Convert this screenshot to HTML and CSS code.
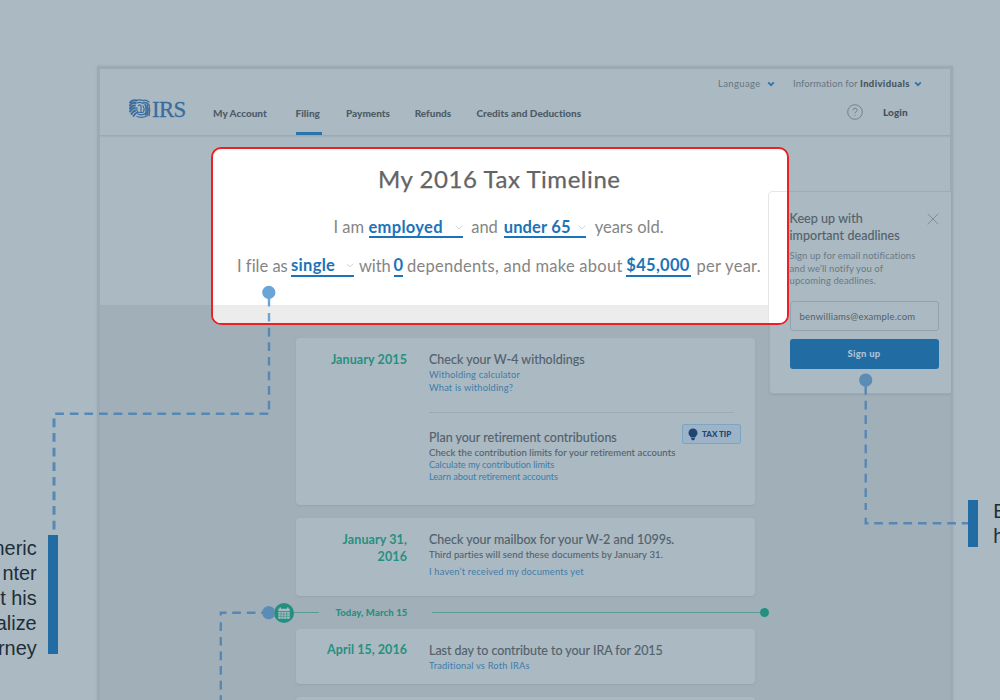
FILE: index.html
```html
<!DOCTYPE html>
<html lang="en">
<head>
<meta charset="utf-8">
<title>My 2016 Tax Timeline</title>
<link rel="stylesheet" href="styles.css">
</head>
<body>
<main class="board">
  <div class="site">
    <header class="header">
      <div class="utility">
        <span class="language">Language</span>
        <svg class="caret" viewBox="0 0 8 6"><path d="M1.2 1.4 4 4.2 6.8 1.4"/></svg>
        <span class="audience">Information for <b>Individuals</b></span>
        <svg class="caret" viewBox="0 0 8 6"><path d="M1.2 1.4 4 4.2 6.8 1.4"/></svg>
      </div>
      <div class="mainbar">
        <div class="logo">
          <svg class="eagle" viewBox="0 0 22 20">
            <g fill="none" stroke="#3a6d9d" stroke-linecap="round">
              <path stroke-width="1.9" d="M7.5 1.5Q3 .5 1 3.500M6.500 4Q3 3 .8 6.500M6 6.500Q3 6 .8 9.500M6 9Q3 9 1 12.500M6.500 11.500Q4 12 2.500 15M8 13.500Q6 14.500 4.500 17"/>
              <path stroke-width="1.300" d="M7.500 1.500Q11 .2 14 1.500M14 1.500Q17 .5 20 3M14.500 3.500Q18 3 20.500 6.500M8 4Q11 2.500 14 4.500M8 17.500Q13 19.500 18 17M9 15Q13 17 17 14"/>
              <path stroke-width="1.200" d="M9.500 6.500Q12 5 12 7.500V13.500M8 8.500Q7 11 9 13M10 13.500H14M14 7Q16 10 14.500 12.500"/>
              <path stroke-width="1.500" d="M16 5Q18 10 16.500 16M18.200 6Q19.500 11 18.200 16M20.300 8Q21 12 20 16.500"/>
            </g>
          </svg>
          <span class="logo-name">IRS</span>
        </div>
        <nav class="nav">
          <a>My Account</a><a class="active">Filing</a><a>Payments</a><a>Refunds</a><a>Credits and Deductions</a>
        </nav>
        <svg class="help" viewBox="0 0 16 16"><circle cx="8" cy="8" r="7.300"/><path d="M5.900 6.300Q6 4.200 8 4.200T10.100 6.200Q10.100 7.200 9 7.800T8 9.500M8 11.200V12"/></svg>
        <a class="login">Login</a>
      </div>
    </header>
    <div class="hero"></div>
    <section class="timeline">
      <article class="card card-a">
        <h2 class="date">January 2015</h2>
        <div class="body">
          <div class="entry first">
            <h3>Check your W-4 witholdings</h3>
            <a class="link wide">Witholding calculator</a>
            <a class="link wide">What is witholding?</a>
          </div>
          <div class="entry second">
            <h3>Plan your retirement contributions</h3>
            <p class="note">Check the contribution limits for your retirement accounts</p>
            <a class="link small">Calculate my contribution limits</a>
            <a class="link small">Learn about retirement accounts</a>
            <div class="tip">
              <svg class="bulb" viewBox="0 0 10 13"><path d="M5 .4A4.500 4.500 0 0 0 .5 4.900C.5 7 2.200 8 2.900 9.500H7.100C7.800 8 9.500 7 9.500 4.900A4.500 4.500 0 0 0 5 .4ZM3.200 10H6.800V11L5.900 12.300H4.100L3.200 11Z"/></svg>
              <span>TAX TIP</span>
            </div>
          </div>
        </div>
      </article>
      <article class="card card-b">
        <h2 class="date">January 31,<br>2016</h2>
        <div class="body">
          <h3>Check your mailbox for your W-2 and 1099s.</h3>
          <p class="note">Third parties will send these documents by January 31.</p>
          <a class="link wide">I haven’t received my documents yet</a>
        </div>
      </article>
      <div class="today">
        <svg class="calendar" viewBox="0 0 20 20">
          <circle cx="10" cy="10" r="10" fill="#23907f"/>
          <path fill="#abb9c3" d="M4.300 5.800H5.500V4.500H7V5.800H13V4.500H14.500V5.800H15.700V8H4.300ZM4.300 8.700H15.700V15.700H4.300Z"/>
          <path fill="none" stroke="#23907f" stroke-width=".55" d="M4.300 11H15.700M4.300 13.300H15.700M7 8.700V15.700M9.800 8.700V15.700M12.700 8.700V15.700"/>
        </svg>
        <i class="rule short"></i><span class="now">Today, March 15</span><i class="rule long"></i><i class="end"></i>
      </div>
      <article class="card card-c">
        <h2 class="date">April 15, 2016</h2>
        <div class="body">
          <h3>Last day to contribute to your IRA for 2015</h3>
          <a class="link wide">Traditional vs Roth IRAs</a>
        </div>
      </article>
      <article class="card card-d"></article>
    </section>
  </div>

  <aside class="signup">
    <div class="signup-head">
      <h2>Keep up with<br>important deadlines</h2>
      <svg class="close" viewBox="0 0 12 12"><path d="M.7.700 11.300 11.300M11.300.7.700 11.300"/></svg>
    </div>
    <p>Sign up for email notifications<br>and we’ll notify you of<br>upcoming deadlines.</p>
    <div class="email">benwilliams@example.com</div>
    <div class="button">Sign up</div>
  </aside>

  <section class="spotlight">
    <div class="under-card"></div>
    <h1>My 2016 Tax Timeline</h1>
    <div class="sentence one">
      <span>I am</span>
      <span class="field"><b>employed</b><svg viewBox="0 0 8 5"><path d="M.7.700 4 3.900 7.300.7"/></svg></span>
      <span>and</span>
      <span class="field"><b class="age">under 65</b><svg viewBox="0 0 8 5"><path d="M.7.700 4 3.900 7.300.7"/></svg></span>
      <span>years old.</span>
    </div>
    <div class="sentence two">
      <span>I file as</span>
      <span class="field"><b>single</b><svg viewBox="0 0 8 5"><path d="M.7.700 4 3.900 7.300.7"/></svg></span>
      <span class="with">with</span>
      <span class="field"><b>0</b></span>
      <span class="loose">dependents, and make about</span>
      <span class="field"><b>$45,000</b></span>
      <span class="loose">per year.</span>
    </div>
    <div class="strip"></div>
  </section>

  <svg class="connectors" viewBox="0 0 1000 700">
    <g fill="none" stroke="#5688b3" stroke-width="2.400" stroke-dasharray="8.700 5.900">
      <path d="M269 327.700V410"/><path d="M268.300 413.700H54"/><path stroke-width="3" d="M54 418.500V530"/>
      <path d="M865.700 400.700V510"/><path d="M874.200 523.300H968"/>
      <path d="M232.200 612.700H262"/><path d="M220.800 622.300V700"/>
    </g>
    <g fill="none" stroke="#5688b3" stroke-width="2.400">
      <path d="M865.700 380V394.700"/><path d="M865.700 517.700V523.300H868.500"/><path d="M226.500 612.700H220.800V615.500"/><path d="M261.500 612.700H269"/>
    </g>
    <path d="M269 292V306.500M269 313V321.500" stroke="#6aa5d7" stroke-width="2.400"/>
    <circle cx="268.800" cy="292.400" r="6.600" fill="#6aa5d7"/>
    <circle cx="865.700" cy="380" r="6.600" fill="#5b8cb6"/>
    <path d="M274.500 609.300A6.600 6.600 0 1 0 274.500 616A10 10 0 0 1 274.500 609.300Z" fill="#5b8cb6"/>
  </svg>

  <div class="callout left"><p>neric<br>nter<br>t his<br>alize<br>rney</p></div>
  <div class="callout right"><p>E<br>h</p></div>
</main>
</body>
</html>
```
FILE: styles.css
```css
* { box-sizing: border-box; }
body { margin: 0; font-family: Lato, "Open Sans", sans-serif; font-variant-ligatures: none; }
h1, h2, h3, p { margin: 0; font-weight: 400; }
.board { position: relative; width: 1000px; height: 700px; overflow: hidden; background: #abb9c3; padding: 66px 0 0 97px; }
.site { width: 856px; height: 700px; border: 3px solid #9caab4; background: #abb9c3; box-shadow: 0 0 2px #9caab4; color: #55636d; }

.header { height: 67px; border-bottom: 1px solid #9ba9b3; box-shadow: 0 1px 1px #a2b0ba; }
.utility { display: grid; grid-template-columns: 49px 26px 121px 8px; align-items: center; height: 30px; padding-left: 618px; font-size: 9.5px; line-height: 12px; white-space: nowrap; color: #667580; letter-spacing: .1px; }
.utility b { color: #465660; font-weight: 900; letter-spacing: .35px; }
.caret { width: 8px; height: 6px; fill: none; stroke: #2b74aa; stroke-width: 1.7; }
.language { letter-spacing: .35px; }
.mainbar { display: grid; grid-template-columns: 84px 634px 36px 60px; height: 36px; padding-left: 29px; font-size: 10px; line-height: 12px; font-weight: 900; color: #4d5c66; }
.logo { display: flex; gap: 1px; height: 22px; }
.eagle { width: 22px; height: 20px; }
.logo-name { font: 24px/21px "Liberation Serif", serif; letter-spacing: -.7px; color: #3a6d9d; transform: scaleX(.95); transform-origin: left; -webkit-text-stroke: .3px #3a6d9d; }
.nav { display: grid; grid-template-columns: 82.5px 50.5px 68.700px 61.800px 120px; white-space: nowrap; }
.nav a { padding-top: 8px; height: 36px; justify-self: start; }
.nav .active { border-bottom: 3px solid #2a74a9; width: 26px; }
.help { width: 16px; height: 16px; margin-top: 5px; fill: none; stroke: #73838e; stroke-width: 1; }
.login { padding-top: 7px; color: #42525c; letter-spacing: .1px; }
.hero { height: 169px; }

.timeline { height: 420px; padding: 33px 196px 0; background: #a1afb9; }
.card { display: grid; grid-template-columns: 111px 1fr; column-gap: 22px; width: 459px; border-radius: 4px; background: #abb9c3; box-shadow: 0 1px 2px #94a3ad; }
.card-a { height: 167px; padding-top: 13px; }
.card-b { height: 78px; margin-top: 13px; padding-top: 13px; }
.card-c { height: 55px; padding-top: 11px; }
.card-d { height: 50px; margin-top: 13px; }
.date { text-align: right; font-size: 12.5px; line-height: 17px; font-weight: 700; color: #26907f; white-space: nowrap; letter-spacing: .1px; }
.card-b .date { margin-top: 1px; line-height: 16.5px; }
.card-c .date { margin-top: 1px; letter-spacing: .05px; }
.card h3 { font-size: 12.500px; line-height: 17px; color: #53616b; white-space: nowrap; -webkit-text-stroke: .15px #53616b; }
.note { font-size: 9.500px; line-height: 13px; color: #53616b; letter-spacing: .09px; white-space: nowrap; -webkit-text-stroke: .1px #53616b; }
.card-b .note { letter-spacing: .13px; }
.link { display: block; font-size: 9.300px; line-height: 12.500px; color: #3d7da8; white-space: nowrap; }
.link.wide { letter-spacing: .18px; }
.link.small { font-size: 9.200px; letter-spacing: -.06px; line-height: 12px; }
.entry.first { height: 62px; width: 305px; border-bottom: 1px solid #9caab4; }
.entry.first h3 { height: 18px; }
.entry.second { position: relative; padding-top: 16px; }
.tip { position: absolute; left: 253px; top: 11px; width: 59px; height: 20px; display: flex; align-items: center; gap: 4px; padding-left: 5px; border: 1px solid #7ba5c3; border-radius: 2px; background: #9db3c7; color: #1f4672; font-size: 8px; font-weight: 900; white-space: nowrap; }
.bulb { width: 10px; height: 13px; fill: #1f4672; }
.card-b .link { margin-top: 5px; }
.card-c h3 { margin-top: 2px; height: 18px; letter-spacing: -.04px; }
.today { display: flex; align-items: center; height: 33px; margin-left: -22.5px; width: 500px; }
.calendar { width: 20px; height: 20px; flex: none; }
.rule { height: 1.500px; background: #5c9a96; }
.short { width: 25px; }
.long { width: 328px; margin-left: 23.5px; }
.end { width: 9px; height: 9px; border-radius: 50%; background: #23907f; }
.now { width: 73px; margin-left: 17px; font-size: 9.500px; font-weight: 900; color: #26907f; letter-spacing: .13px; white-space: nowrap; }

.signup { position: absolute; left: 769px; top: 191px; width: 182px; height: 203px; padding: 19px 12px 0 19.5px; border: 1px solid #9eacb6; border-right: 0; border-radius: 4px 0 0 4px; background: #abb9c3; box-shadow: 0 1px 2px #93a1ab; color: #6a7983; }
.signup-head { display: flex; justify-content: space-between; }
.signup h2 { font-size: 12.500px; line-height: 16.500px; color: #53616b; letter-spacing: .07px; white-space: nowrap; -webkit-text-stroke: .15px #53616b; }
.close { width: 12px; height: 12px; margin-top: 2px; fill: none; stroke: #7f8e99; stroke-width: 1; }
.signup p { margin-top: 6px; font-size: 9.500px; line-height: 12.700px; letter-spacing: .08px; white-space: nowrap; }
.email { width: 149px; height: 30px; margin-top: 13px; padding-left: 9px; border: 1px solid #93a2ad; border-radius: 3px; font-size: 9.500px; line-height: 29px; letter-spacing: .19px; color: #53616b; }
.button { width: 149px; height: 30px; margin-top: 8px; border-radius: 3px; background: #216ca3; text-align: center; font-size: 9.500px; line-height: 30px; font-weight: 900; letter-spacing: .25px; color: #abc2d3; }

.spotlight { position: absolute; left: 211px; top: 147px; width: 578px; height: 178px; padding-top: 14px; border: 2px solid #ed2024; border-radius: 10px; overflow: hidden; background: #fff; color: #858585; }
.under-card { position: absolute; right: -3px; top: 42px; width: 22px; height: 140px; border: 1px solid #e6e6e6; border-radius: 4px 0 0; background: #fff; }
h1 { height: 32px; padding-left: 165px; font-size: 24px; line-height: 32px; color: #636466; letter-spacing: .55px; white-space: nowrap; -webkit-text-stroke: .25px #636466; }
.sentence { display: grid; align-items: start; font-size: 16.500px; line-height: 19px; white-space: nowrap; }
.one { grid-template-columns: 35px 102.700px 32.500px 91px 80px; margin: 23px 0 0 120.500px; }
.two { grid-template-columns: 54px 68px 34.500px 13.500px 219.300px 70.300px 70px; margin: 18.5px 0 0 24px; }
.field { display: flex; align-items: center; justify-content: space-between; height: 20px; color: #1b74b9; border-bottom: 2px solid #1b74b9; letter-spacing: .3px; }
.field svg { width: 8px; height: 5px; fill: none; stroke: #d0d5d9; stroke-width: 1; }
.age { letter-spacing: .15px; }
.with { letter-spacing: -.1px; }
.loose { letter-spacing: .27px; }
.one .field:nth-child(2) { width: 94px; }
.one .field:nth-child(4) { width: 82px; }
.two .field:nth-child(2) { width: 63px; }
.two .field:nth-child(4) { width: 9px; }
.two .field:nth-child(6) { width: 65px; }
.strip { width: 556px; height: 30px; margin-top: 28.5px; background: #ececec; }
.connectors { position: absolute; left: 0; top: 0; width: 1000px; height: 700px; }

.callout { position: absolute; font: 19.900px/25px "Liberation Sans", Arial, sans-serif; color: #202e37; white-space: nowrap; }
.left { left: 0; width: 58px; top: 535px; height: 119px; border-right: 10px solid #216ca3; }
.left p { display: flow-root; width: 36.7px; margin-top: 1px; direction: rtl; text-align: right; direction: ltr; margin-left: -12px; width: 48.700px; }
.right { left: 968.300px; top: 500px; height: 47px; padding-left: 15px; border-left: 10.700px solid #216ca3; }
.right p { margin-top: -1.500px; }
```
